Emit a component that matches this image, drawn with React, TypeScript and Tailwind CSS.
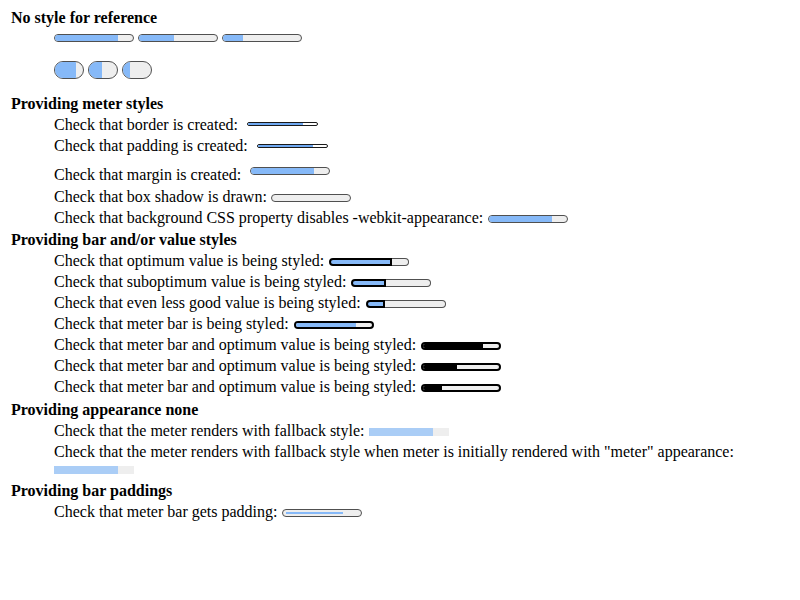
import React from "react";

const Row = ({ h, children }: { h: string; children: React.ReactNode }) => (
  <div className={`${h} pl-[54px] leading-[21px] whitespace-nowrap`}>{children}</div>
);

function Std({ fill, cls = "" }: { fill: string; cls?: string }) {
  return (
    <span className={`inline-block w-[80px] h-[8px] rounded-full border border-[#505050] bg-[#eeeeee] overflow-hidden ${cls}`}>
      <span className={`block h-full bg-[#86b9f8] ${fill}`} />
    </span>
  );
}

function Val({ fillW }: { fillW: string }) {
  return (
    <span className="inline-flex ml-[1px] w-[80px] h-[8px]">
      <span className={`block h-full ${fillW} border-2 border-black rounded-l-full bg-[#86b9f8]`} />
      <span className="block h-full flex-1 border border-l-0 border-[#505050] rounded-r-full bg-[#eeeeee]" />
    </span>
  );
}

function BlackBar({ fill }: { fill: string }) {
  return (
    <span className="inline-block ml-[1px] w-[80px] h-[8px] rounded-full border-2 border-black bg-[#eeeeee] overflow-hidden">
      <span className={`block h-full bg-black ${fill}`} />
    </span>
  );
}

export default function App() {
  return (
    <div className="w-[800px] h-[600px] bg-white text-black text-[16px] font-['Liberation_Serif','Times_New_Roman',serif] pt-[7px]">
      <div className="h-[27px] pl-[11px] leading-[21px] font-bold">No style for reference</div>
      <div className="h-[27px] pl-[54px] flex items-start gap-[4px]">
        <Std fill="w-[81%]" />
        <Std fill="w-[45%]" />
        <Std fill="w-[26%]" />
      </div>
      <div className="h-[32px] pl-[54px] flex items-start gap-[4px]">
        {["w-[76%]", "w-[45%]", "w-[25%]"].map((w, i) => (
          <span key={i} className="block w-[30px] h-[18px] rounded-full border border-[#505050] bg-[#eeeeee] overflow-hidden">
            <span className={`block h-full bg-[#86b9f8] ${w}`} />
          </span>
        ))}
      </div>

      <div className="h-[21px] pl-[11px] leading-[21px] font-bold">Providing meter styles</div>
      <Row h="h-[21px]">
        Check that border is created:{" "}
        <span className="inline-block ml-[5px] w-[71px] h-[4px] align-[4px] rounded-full border border-[#1a1a1a] bg-white overflow-hidden">
          <span className="block h-full w-[80%] bg-[#6fa9f2]" />
        </span>
      </Row>
      <Row h="h-[29px]">
        Check that padding is created:{" "}
        <span className="inline-block ml-[5px] w-[71px] h-[4px] align-[3px] rounded-full border border-[#1a1a1a] bg-white overflow-hidden">
          <span className="block h-full w-[80%] bg-[#6fa9f2]" />
        </span>
      </Row>
      <Row h="h-[22px]">
        Check that margin is created:{" "}
        <Std fill="w-[80%]" cls="ml-[5px] align-[5px]" />
      </Row>
      <Row h="h-[21px]">
        Check that box shadow is drawn:{" "}
        <Std fill="w-0" />
      </Row>
      <Row h="h-[22px]">
        Check that background CSS property disables -webkit-appearance:{" "}
        <Std fill="w-[80%]" cls="ml-[1px]" />
      </Row>

      <div className="h-[21px] pl-[11px] leading-[21px] font-bold">Providing bar and/or value styles</div>
      <Row h="h-[21px]">
        Check that optimum value is being styled: <Val fillW="w-[63px]" />
      </Row>
      <Row h="h-[21px]">
        Check that suboptimum value is being styled: <Val fillW="w-[35px]" />
      </Row>
      <Row h="h-[21px]">
        Check that even less good value is being styled: <Val fillW="w-[19px]" />
      </Row>
      <Row h="h-[21px]">
        Check that meter bar is being styled:{" "}
        <span className="inline-block ml-[1px] w-[80px] h-[8px] rounded-full border-2 border-black bg-[#eeeeee] overflow-hidden">
          <span className="block h-full w-[79%] bg-[#86b9f8]" />
        </span>
      </Row>
      <Row h="h-[21px]">
        Check that meter bar and optimum value is being styled: <BlackBar fill="w-[79%]" />
      </Row>
      <Row h="h-[21px]">
        Check that meter bar and optimum value is being styled: <BlackBar fill="w-[45%]" />
      </Row>
      <Row h="h-[23px]">
        Check that meter bar and optimum value is being styled: <BlackBar fill="w-[25%]" />
      </Row>

      <div className="h-[21px] pl-[11px] leading-[21px] font-bold">Providing appearance none</div>
      <Row h="h-[21px]">
        Check that the meter renders with fallback style:{" "}
        <span className="inline-block w-[80px] h-[8px] bg-[#eeeeee]">
          <span className="block h-full w-[80%] bg-[#aacdf6]" />
        </span>
      </Row>
      <Row h="h-[21px]">
        Check that the meter renders with fallback style when meter is initially rendered with "meter" appearance:
      </Row>
      <div className="pl-[54px] pt-[4px] h-[18px]">
        <span className="block w-[80px] h-[8px] bg-[#eeeeee]">
          <span className="block h-full w-[80%] bg-[#aacdf6]" />
        </span>
      </div>

      <div className="h-[21px] pl-[11px] leading-[21px] font-bold">Providing bar paddings</div>
      <Row h="h-[21px]">
        Check that meter bar gets padding:{" "}
        <span className="inline-block ml-[1px] w-[80px] h-[8px] rounded-full border border-[#505050] bg-[#eeeeee] px-[3px] py-[2px]">
          <span className="block h-full w-[79%] bg-[#86b9f8]" />
        </span>
      </Row>
    </div>
  );
}
